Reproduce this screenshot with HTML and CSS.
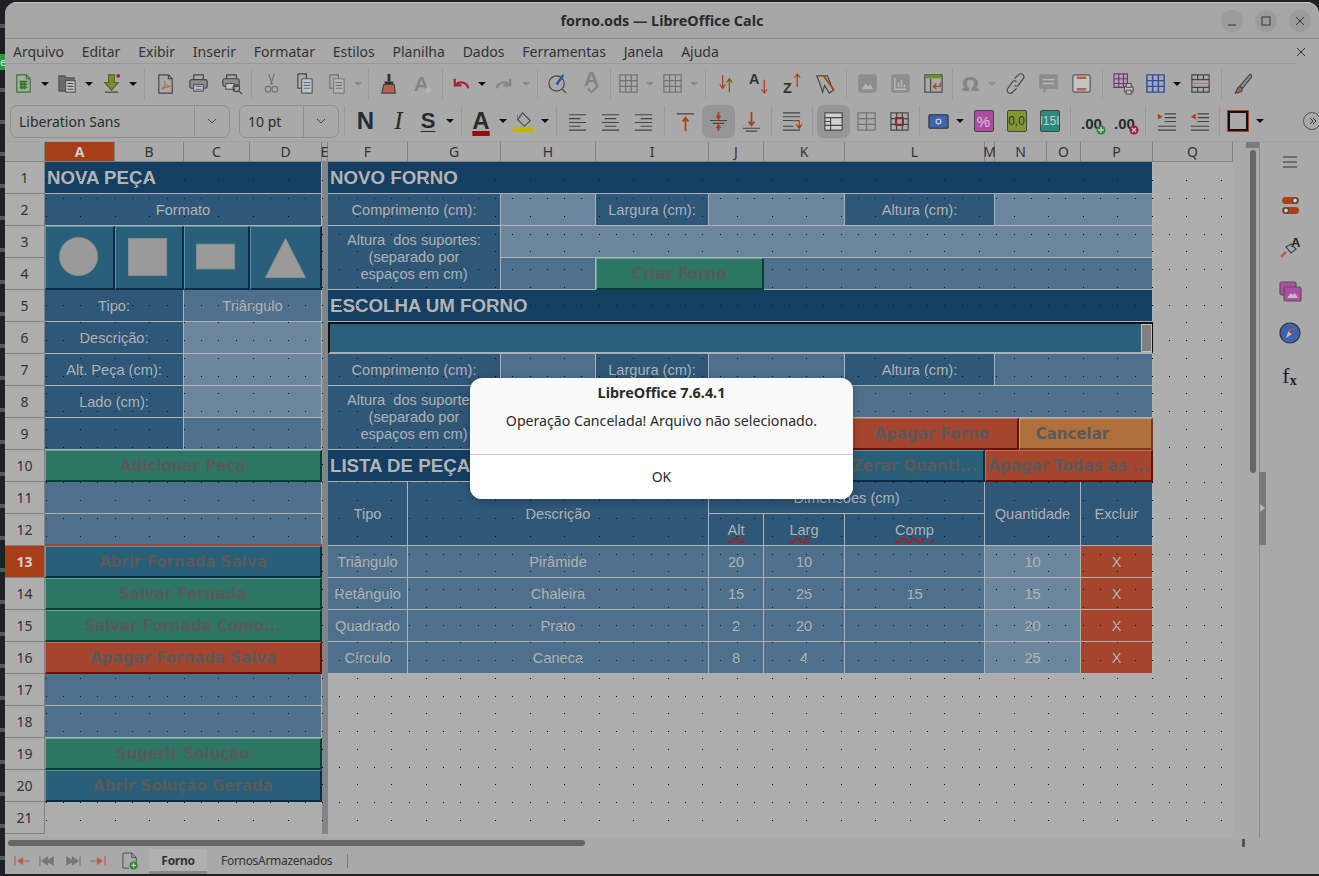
FILE: index.html
```html
<!DOCTYPE html>
<html lang="pt-BR">
  <head>
    <meta charset="UTF-8">
    <title>forno.ods — LibreOffice Calc</title>
    <link rel="stylesheet" href="styles.css">
  </head>
  <body>
    <div class="desk"><span class="desk-app">e</span></div>
    <div class="window">
      <!-- Title bar -->
      <div class="titlebar">
        <span class="title">forno.ods — LibreOffice Calc</span>
        <div class="win-btns">
          <span class="win-btn"><svg viewBox="0 0 22 22"><path d="M7 15h8"/></svg></span>
          <span class="win-btn"><svg viewBox="0 0 22 22"><rect x="7" y="7" width="8" height="8"/></svg></span>
          <span class="win-btn"><svg viewBox="0 0 22 22"><path d="M7 7l8 8M15 7l-8 8"/></svg></span>
        </div>
      </div>

      <!-- Menu -->
      <div class="menubar">
        <span>Arquivo</span><span>Editar</span><span>Exibir</span><span>Inserir</span><span>Formatar</span><span>Estilos</span><span>Planilha</span><span>Dados</span><span>Ferramentas</span><span>Janela</span><span>Ajuda</span>
        <svg class="menu-close" viewBox="0 0 10 10"><path d="M1 1l8 8M9 1l-8 8"/></svg>
      </div>

      <!-- Standard toolbar -->
      <div class="toolbar tb1">
        <span class="ico split"><svg viewBox="0 0 24 24"><path class="grn" d="M5 3h10l4 4v14H5z"/><path class="grn" d="M15 3v4h4"/><path class="grn fat" d="M8 10h8M8 13h8M8 16h8M10 9v9M13 9v9"/></svg></span><span class="drop"></span>
        <span class="ico split"><svg viewBox="0 0 24 24"><path class="gry-fill" d="M3 7V4h6l2 2h8v14H3z"/><rect class="pale" x="10" y="9" width="10" height="12"/><path d="M12 12h6M12 15h6M12 18h6"/></svg></span><span class="drop"></span>
        <span class="ico split"><svg viewBox="0 0 24 24"><path class="olive" d="M9 3h6v8h4l-7 8-7-8h4z"/><path d="M5 21h14"/><circle class="dot-red" cx="19" cy="4" r="2"/></svg></span><span class="drop"></span>
        <span class="sep"></span>
        <span class="ico"><svg viewBox="0 0 24 24"><path d="M5 3h10l4 4v15H5z"/><path d="M15 3v4h4"/><path class="sal" d="M8 18c3-2 4-6 3-9 0 4 3 6 6 6-4 0-6 1-9 3z"/></svg></span>
        <span class="ico"><svg viewBox="0 0 24 24"><path d="M7 8V3h10v5"/><rect class="gry-soft" x="3" y="8" width="18" height="9" rx="2"/><rect class="pale" x="7" y="13" width="10" height="7"/><path class="blu" d="M9 15h6M9 18h6"/></svg></span>
        <span class="ico"><svg viewBox="0 0 24 24"><path d="M7 7V3h10v4"/><rect class="gry-soft" x="3" y="7" width="17" height="8" rx="2"/><rect class="pale" x="6" y="12" width="9" height="6"/><circle cx="17" cy="17" r="3.500"/><path d="M20 20l3 3"/></svg></span>
        <span class="sep snug"></span>
        <span class="ico off"><svg viewBox="0 0 24 24"><path d="M9 2l4 11M15 2l-4 11"/><circle cx="8.500" cy="18" r="3"/><circle cx="15.500" cy="18" r="3"/></svg></span>
        <span class="ico"><svg viewBox="0 0 24 24"><path d="M5 2h9v5"/><path d="M5 2v15h4"/><rect class="pale" x="9" y="7" width="11" height="15" rx="1"/><path class="blu" d="M11 11h7M11 14h7M11 17h7"/></svg></span>
        <span class="ico split off"><svg viewBox="0 0 24 24"><path d="M5 3h9v4M5 3v14h4"/><rect class="pale" x="9" y="7" width="11" height="15" rx="1"/><path d="M11 11h7M11 14h7M11 17h7"/></svg></span><span class="drop off"></span>
        <span class="sep snug"></span>
        <span class="ico"><svg viewBox="0 0 24 24"><path class="dark-fill" d="M11 2h3v8h-3z"/><path class="dark-fill" d="M8 10h9v3H8z"/><path class="sal-fill" d="M7 13h11l1 9H5z"/></svg></span>
        <span class="ico off"><svg viewBox="0 0 24 24"><text class="glyph-a" x="4" y="20">A</text><circle class="pale-off" cx="19" cy="19" r="3"/></svg></span>
        <span class="sep"></span>
        <span class="ico split narrow"><svg viewBox="0 0 24 24"><path class="red-line" d="M19 17c-1-6-8-8-13-4"/><path class="red-line" d="M5 7v7h7"/></svg></span><span class="drop"></span>
        <span class="ico split off"><svg viewBox="0 0 24 24"><path class="thick" d="M4 17c1-6 8-8 13-4"/><path class="thick" d="M18 7v7h-7"/></svg></span><span class="drop off"></span>
        <span class="sep wide-sep"></span>
        <span class="ico"><svg viewBox="0 0 24 24"><circle cx="10" cy="12" r="8"/><path d="M16 18l4 4"/><path class="blu-fat" d="M10 13l7-10"/></svg></span>
        <span class="ico off"><svg viewBox="0 0 24 24"><text class="glyph-a" x="4" y="15">A</text><path class="thick" d="M8 17l4 4 7-7"/></svg></span>
        <span class="sep tight"></span>
        <span class="ico split off"><svg viewBox="0 0 24 24"><rect x="3" y="3" width="18" height="18"/><path d="M3 9h18M3 15h18M9 3v18M15 3v18"/></svg></span><span class="drop off"></span>
        <span class="ico split off"><svg viewBox="0 0 24 24"><rect x="3" y="3" width="18" height="18"/><path d="M3 9h18M3 15h18M9 3v18M15 3v18"/></svg></span><span class="drop off"></span>
        <span class="sep"></span>
        <span class="ico"><svg viewBox="0 0 24 24"><path class="org-line" d="M8 3v14M5 13l3 4 3-4M15 21V7M12 11l3-4 3 4"/></svg></span>
        <span class="ico"><svg viewBox="0 0 24 24"><text class="glyph-sm" x="1" y="12">A</text><path class="org-line" d="M17 8v14M14 18l3 4 3-4"/></svg></span>
        <span class="ico"><svg viewBox="0 0 24 24"><text class="glyph-sm" x="2" y="22">Z</text><path class="org-line" d="M17 16V2M14 6l3-4 3 4"/></svg></span>
        <span class="ico"><svg viewBox="0 0 24 24"><path d="M3 4h11l6 15-4 3-5-8-2 7-3-9z"/><path class="org-fat" d="M10 4l11 15"/></svg></span>
        <span class="sep"></span>
        <span class="ico off"><svg viewBox="0 0 24 24"><rect class="off-fill" x="3" y="3" width="18" height="18" rx="2"/><path class="pale-off" d="M6 18l4-6 3 3 2-2 3 5z"/></svg></span>
        <span class="ico off"><svg viewBox="0 0 24 24"><rect class="off-fill" x="3" y="3" width="18" height="18" rx="2"/><path class="pale-line" d="M6 6v12h12M10 16v-5M13 16V8M16 16v-3"/></svg></span>
        <span class="ico"><svg viewBox="0 0 24 24"><rect x="3" y="3" width="18" height="18"/><path class="olive-fat" d="M4 5h16"/><path d="M9 7v13"/><path class="org-line" d="M19 11v4h-7M15 12l-3 3 3 3"/></svg></span>
        <span class="sep tight"></span>
        <span class="ico split off"><svg viewBox="0 0 24 24"><text class="glyph-om" x="3" y="20">Ω</text></svg></span><span class="drop off"></span>
        <span class="ico"><svg viewBox="0 0 24 24"><path d="M11 7l4-4a3 3 0 0 1 5 4l-5 7a3 3 0 0 1-4 0"/><path d="M13 17l-4 4a3 3 0 0 1-5-4l5-7a3 3 0 0 1 4 0"/></svg></span>
        <span class="ico off"><svg viewBox="0 0 24 24"><path class="off-fill" d="M3 3h18v14h-11l-3 4v-4H3z"/><path class="pale-line" d="M6 8h12M6 12h12"/></svg></span>
        <span class="ico"><svg viewBox="0 0 24 24"><rect class="pale" x="3" y="3" width="18" height="18" rx="2"/><path class="sal-fat" d="M7 6h10M7 18h10"/></svg></span>
        <span class="sep"></span>
        <span class="ico"><svg viewBox="0 0 24 24"><path class="pur" d="M2 2h14v14H2zM2 7h14M2 12h14M7 2v14M12 2v14"/><rect class="pale" x="13" y="15" width="9" height="6" rx="1"/><rect class="pale" x="15" y="12" width="5" height="4"/><rect class="pale" x="15" y="19" width="5" height="4"/></svg></span>
        <span class="ico split"><svg viewBox="0 0 24 24"><path class="blu-dark" d="M3 3h18v18H3zM3 9h18M3 15h18M9 3v18M15 3v18"/></svg></span><span class="drop"></span>
        <span class="ico"><svg viewBox="0 0 24 24"><path d="M3 3h18v18H3zM3 8h18M3 16h18M9 3v5M15 3v5M9 16v5M15 16v5"/><path class="sal" d="M2 12h20" stroke-dasharray="2 1"/></svg></span>
        <span class="sep"></span>
        <span class="ico"><svg viewBox="0 0 24 24"><path class="gry-soft" d="M20 2c2 1 2 3 1 4l-9 11-3-2z"/><path class="sal-fill" d="M9 15l3 2c0 3-3 5-8 5 2-1 2-6 5-7z"/></svg></span>
      </div>

      <!-- Formatting toolbar -->
      <div class="toolbar tb2">
        <div class="combo font-combo"><span class="combo-text">Liberation Sans</span><span class="combo-btn"><svg viewBox="0 0 10 6"><path d="M1 1l4 4 4-4"/></svg></span></div>
        <div class="combo size-combo"><span class="combo-text">10 pt</span><span class="combo-btn"><svg viewBox="0 0 10 6"><path d="M1 1l4 4 4-4"/></svg></span></div>
        <span class="sep"></span>
        <span class="ico txt bold">N</span>
        <span class="ico txt ital">I</span>
        <span class="ico txt under split pull">S</span><span class="drop"></span>
        <span class="sep"></span>
        <span class="ico txt color split">A</span><span class="drop"></span>
        <span class="ico split pull"><svg viewBox="0 0 24 24"><path d="M11 3l8 8-6 6-7-7z"/><path class="blu" d="M6 9V5"/><rect class="ylw" x="1" y="18" width="22" height="5"/></svg></span><span class="drop"></span>
        <span class="sep"></span>
        <span class="ico"><svg viewBox="0 0 24 24"><path d="M3 5h18M3 9h12M3 13h18M3 17h12M3 21h18"/></svg></span>
        <span class="ico"><svg viewBox="0 0 24 24"><path d="M3 5h18M6 9h12M3 13h18M6 17h12M3 21h18"/></svg></span>
        <span class="ico"><svg viewBox="0 0 24 24"><path d="M3 5h18M9 9h12M3 13h18M9 17h12M3 21h18"/></svg></span>
        <span class="sep"></span>
        <span class="ico"><svg viewBox="0 0 24 24"><path d="M3 4h18"/><path class="org-fat" d="M12 22V8M9 12l3-4 3 4"/></svg></span>
        <span class="ico active"><svg viewBox="0 0 24 24"><path d="M3 11h18M6 14h12"/><path class="org-fat" d="M12 2v6M10 6l2 3 2-3M12 22v-5M10 19l2-3 2 3"/></svg></span>
        <span class="ico"><svg viewBox="0 0 24 24"><path d="M3 19h18M6 22h12"/><path class="org-fat" d="M12 2v13M9 12l3 4 3-4"/></svg></span>
        <span class="sep snug"></span>
        <span class="ico"><svg viewBox="0 0 24 24"><path d="M3 3h18M3 7h18M3 11h11M3 21h18M3 17h11"/><path class="org-line" d="M14 11h6v7M17 15l3 4 3-4"/></svg></span>
        <span class="sep"></span>
        <span class="ico active"><svg viewBox="0 0 24 24"><rect class="light" x="3" y="3" width="18" height="18"/><path d="M3 8h18M3 16h18M9 8v13"/><path d="M9 12H3"/></svg></span>
        <span class="ico off"><svg viewBox="0 0 24 24"><rect x="3" y="3" width="18" height="18"/><path d="M3 9h18M3 15h18M12 3v18"/></svg></span>
        <span class="ico"><svg viewBox="0 0 24 24"><rect x="3" y="3" width="18" height="18"/><path d="M3 9h18M3 15h18M9 3v18M15 3v18"/><rect class="red-line thin" x="8" y="8" width="8" height="8"/></svg></span>
        <span class="sep snug"></span>
        <span class="ico split"><svg viewBox="0 0 24 24"><rect class="blu-fill" x="2" y="5" width="20" height="14" rx="1"/><circle class="pale-line" cx="12" cy="12" r="2.500"/></svg></span><span class="drop"></span>
        <span class="ico"><span class="chip chip-pur">%</span></span>
        <span class="ico"><span class="chip chip-olv">0,0</span></span>
        <span class="ico"><span class="chip chip-teal">I15I</span></span>
        <span class="sep"></span>
        <span class="ico txt dec">.00<svg class="badge" viewBox="0 0 10 10"><circle class="bg-grn" cx="5" cy="5" r="4.500"/><path class="pale-line" d="M5 2v6M2 5h6"/></svg></span>
        <span class="ico txt dec">.00<svg class="badge" viewBox="0 0 10 10"><circle class="bg-red" cx="5" cy="5" r="4.500"/><path class="pale-line" d="M3 3l4 4M7 3l-4 4"/></svg></span>
        <span class="sep"></span>
        <span class="ico"><svg viewBox="0 0 24 24"><path d="M10 4h12M10 8h12M10 12h12M3 17h19M3 21h19"/><path class="org-solid" d="M3 4l5 3-5 3z"/></svg></span>
        <span class="ico"><svg viewBox="0 0 24 24"><path d="M10 4h12M10 8h12M10 12h12M3 17h19M3 21h19"/><path class="org-solid" d="M8 4l-5 3 5 3z"/></svg></span>
        <span class="sep snug"></span>
        <span class="ico split"><span class="border-ico"></span></span><span class="drop"></span>
        <span class="more"><svg viewBox="0 0 16 16"><path d="M6 5l3 3-3 3M9 5l3 3-3 3"/></svg></span>
      </div>

      <!-- Sheet -->
      <div class="main">
        <div class="sheet">
          <div class="col-hd"></div><div class="col-hd on">A</div><div class="col-hd">B</div><div class="col-hd">C</div><div class="col-hd">D</div><div class="col-hd">E</div><div class="col-hd">F</div><div class="col-hd">G</div><div class="col-hd">H</div><div class="col-hd">I</div><div class="col-hd">J</div><div class="col-hd">K</div><div class="col-hd">L</div><div class="col-hd">M</div><div class="col-hd">N</div><div class="col-hd">O</div><div class="col-hd">P</div><div class="col-hd">Q</div>

          <div class="row-hd r-1">1</div><div class="row-hd r-2">2</div><div class="row-hd r-3">3</div><div class="row-hd r-4">4</div><div class="row-hd r-5">5</div><div class="row-hd r-6">6</div><div class="row-hd r-7">7</div><div class="row-hd r-8">8</div><div class="row-hd r-9">9</div><div class="row-hd r-10">10</div><div class="row-hd r-11">11</div><div class="row-hd r-12">12</div><div class="row-hd r-13 on">13</div><div class="row-hd r-14">14</div><div class="row-hd r-15">15</div><div class="row-hd r-16">16</div><div class="row-hd r-17">17</div><div class="row-hd r-18">18</div><div class="row-hd r-19">19</div><div class="row-hd r-20">20</div><div class="row-hd r-21">21</div>

          <div class="col-e"></div>

          <!-- Left block -->
          <div class="cell dk head r-1 c-ad">NOVA PEÇA</div>
          <div class="cell md r-2 c-ad">Formato</div>
          <div class="btn teal shape r-3 h2 c-a"><svg viewBox="0 0 70 64"><circle cx="34" cy="31" r="20"/></svg></div>
          <div class="btn teal shape r-3 h2 c-b"><svg viewBox="0 0 69 64"><rect x="13" y="12" width="40" height="39"/></svg></div>
          <div class="btn teal shape r-3 h2 c-c"><svg viewBox="0 0 66 64"><rect x="12" y="18" width="40" height="26"/></svg></div>
          <div class="btn teal shape r-3 h2 c-d"><svg viewBox="0 0 72 64"><path d="M36 12l21 41H15z"/></svg></div>
          <div class="cell md r-5 c-ab">Tipo:</div><div class="cell lt r-5 c-cd">Triângulo</div>
          <div class="cell md r-6 c-ab">Descrição:</div><div class="cell in r-6 c-cd"></div>
          <div class="cell md r-7 c-ab">Alt. Peça (cm):</div><div class="cell in r-7 c-cd"></div>
          <div class="cell md r-8 c-ab">Lado (cm):</div><div class="cell in r-8 c-cd"></div>
          <div class="cell md r-9 c-ab"></div><div class="cell lt r-9 c-cd"></div>
          <div class="btn green r-10 c-ad">Adicionar Peça</div>
          <div class="cell lt r-11 c-ad"></div>
          <div class="cell lt r-12 c-ad"></div>
          <div class="btn teal current r-13 c-ad">Abrir Fornada Salva</div>
          <div class="btn green r-14 c-ad">Salvar Fornada</div>
          <div class="btn green r-15 c-ad">Salvar Fornada Como...</div>
          <div class="btn red r-16 c-ad">Apagar Fornada Salva</div>
          <div class="cell lt r-17 c-ad"></div>
          <div class="cell lt r-18 c-ad"></div>
          <div class="btn green r-19 c-ad">Sugerir Solução</div>
          <div class="btn teal r-20 c-ad">Abrir Solução Gerada</div>

          <!-- Novo forno -->
          <div class="cell dk head r-1 c-fp">NOVO FORNO</div>
          <div class="cell md r-2 c-fg">Comprimento (cm):</div><div class="cell in r-2 c-h"></div>
          <div class="cell md r-2 c-i">Largura (cm):</div><div class="cell in r-2 c-jk"></div>
          <div class="cell md r-2 c-lm">Altura (cm):</div><div class="cell in r-2 c-np"></div>
          <div class="cell md multi r-3 h2 c-fg">Altura&nbsp; dos suportes:<br>(separado por<br>espaços em cm)</div>
          <div class="cell in r-3 c-hp"></div>
          <div class="cell lt r-4 c-h"></div>
          <div class="btn green r-4 c-ij">Criar Forno</div>
          <div class="cell lt r-4 c-kp"></div>

          <!-- Escolha um forno -->
          <div class="cell dk head r-5 c-fp">ESCOLHA UM FORNO</div>
          <div class="select r-6 c-fp"><span class="select-btn"></span></div>
          <div class="cell md r-7 c-fg">Comprimento (cm):</div><div class="cell lt r-7 c-h"></div>
          <div class="cell md r-7 c-i">Largura (cm):</div><div class="cell lt r-7 c-jk"></div>
          <div class="cell md r-7 c-lm">Altura (cm):</div><div class="cell lt r-7 c-np"></div>
          <div class="cell md multi r-8 h2 c-fg">Altura&nbsp; dos suportes:<br>(separado por<br>espaços em cm)</div>
          <div class="cell lt r-8 c-hp"></div>
          <div class="cell lt r-9 c-hk"></div>
          <div class="pair r-9 c-lp">
            <div class="btn red wide">Apagar Forno</div>
            <div class="btn orange fill">Cancelar</div>
          </div>

          <!-- Lista de pecas -->
          <div class="cell dk head r-10 c-fk">LISTA DE PEÇAS</div>
          <div class="btn teal small r-10 c-l">Zerar Quanti...</div>
          <div class="btn red small r-10 c-mp">Apagar Todas as ...</div>
          <div class="cell md r-11 h2 c-f">Tipo</div>
          <div class="cell md r-11 h2 c-gi">Descrição</div>
          <div class="cell md r-11 c-jl">Dimensões (cm)</div>
          <div class="cell md r-11 h2 c-mo">Quantidade</div>
          <div class="cell md r-11 h2 c-p">Excluir</div>
          <div class="cell md r-12 c-j"><span class="typo">Alt</span></div>
          <div class="cell md r-12 c-k"><span class="typo">Larg</span></div>
          <div class="cell md r-12 c-l"><span class="typo">Comp</span></div>

          <div class="cell lt r-13 c-f">Triângulo</div><div class="cell lt r-13 c-gi">Pirâmide</div><div class="cell lt r-13 c-j">20</div><div class="cell lt r-13 c-k">10</div><div class="cell lt r-13 c-l"></div><div class="cell in r-13 c-mo">10</div><div class="cell del r-13 c-p">X</div>
          <div class="cell lt r-14 c-f">Retângulo</div><div class="cell lt r-14 c-gi">Chaleira</div><div class="cell lt r-14 c-j">15</div><div class="cell lt r-14 c-k">25</div><div class="cell lt r-14 c-l">15</div><div class="cell in r-14 c-mo">15</div><div class="cell del r-14 c-p">X</div>
          <div class="cell lt r-15 c-f">Quadrado</div><div class="cell lt r-15 c-gi">Prato</div><div class="cell lt r-15 c-j">2</div><div class="cell lt r-15 c-k">20</div><div class="cell lt r-15 c-l"></div><div class="cell in r-15 c-mo">20</div><div class="cell del r-15 c-p">X</div>
          <div class="cell lt r-16 c-f">Círculo</div><div class="cell lt r-16 c-gi">Caneca</div><div class="cell lt r-16 c-j">8</div><div class="cell lt r-16 c-k">4</div><div class="cell lt r-16 c-l"></div><div class="cell in r-16 c-mo">25</div><div class="cell del r-16 c-p">X</div>

          <!-- Grid dots drawn by Calc over the cells, filled in by dots.js -->
          <svg class="dots"><path id="grid-dots"/></svg>
        </div>

        <div class="vscroll">
          <span class="vscroll-top"></span>
          <span class="vscroll-thumb"></span>
        </div>

        <!-- Sidebar -->
        <div class="sidebar">
          <span class="side-handle"></span>
          <svg class="side-ico" viewBox="0 0 24 24"><path d="M5 7h14M5 12h14M5 17h14"/></svg>
          <svg class="side-ico" viewBox="0 0 24 24"><rect class="org-solid" x="4" y="3" width="17" height="7" rx="3.500"/><circle class="light" cx="17" cy="6.500" r="2.500"/><rect class="org-solid" x="4" y="13" width="17" height="7" rx="3.500"/><circle class="light" cx="8" cy="16.500" r="2.500"/></svg>
          <svg class="side-ico" viewBox="0 0 24 24"><text class="glyph-side" x="13" y="11">A</text><path d="M8 11l5-3 5 5-5 4z"/><path class="sal-fat" d="M3 21l5-5"/></svg>
          <svg class="side-ico" viewBox="0 0 24 24"><rect class="pink" x="2" y="3" width="16" height="13" rx="2"/><rect class="pink" x="6" y="8" width="17" height="14" rx="2"/><path class="pale-off" d="M9 19l4-5 2 2 2-2 3 5z"/></svg>
          <svg class="side-ico" viewBox="0 0 24 24"><circle class="blu-fill" cx="12" cy="12" r="10"/><path class="pale-off" d="M16 7l-6 4-2 6 6-4z"/><path class="red-solid" d="M16 7l-5 4 3 2z"/></svg>
          <div class="side-fx">f<sub>x</sub></div>
        </div>
      </div>

      <!-- Scroll + sheet tabs -->
      <div class="hscroll"><span class="hscroll-thumb"></span><span class="hscroll-mark"></span></div>
      <div class="tabbar">
        <div class="tab-nav">
          <svg viewBox="0 0 18 12" class="sal-nav"><path d="M1 1v10M4 6h13M4 6l5-3v6z"/></svg>
          <svg viewBox="0 0 18 12" class="gry-nav"><path d="M1 1v10M9 6l6-4v8zM3 6l6-4v8z"/></svg>
          <svg viewBox="0 0 18 12" class="gry-nav"><path d="M17 1v10M9 6L3 2v8zM15 6L9 2v8z"/></svg>
          <svg viewBox="0 0 18 12" class="sal-nav"><path d="M17 1v10M14 6H1M14 6L9 3v6z"/></svg>
        </div>
        <svg class="tab-add" viewBox="0 0 18 20"><path d="M1 2q0-1 1-1h9l5 5v6M1 2v15q0 1 1 1h6"/><path d="M11 1v5h5"/><circle class="bg-grn" cx="13" cy="15" r="4.500"/><path class="pale-line" d="M13 12.500v5M10.500 15h5"/></svg>
        <span class="tab on">Forno</span>
        <span class="tab">FornosArmazenados</span>
        <span class="tab-sep"></span>
      </div>

      <!-- Message box -->
      <div class="dialog">
        <div class="dialog-body">
          <div class="dialog-title">LibreOffice 7.6.4.1</div>
          <div class="dialog-msg">Operação Cancelada! Arquivo não selecionado.</div>
        </div>
        <div class="dialog-btn">OK</div>
      </div>
    </div>
    <script src="dots.js"></script>
  </body>
</html>
```

FILE: styles.css
```css
/* Reset */
* {
  margin: 0;
  padding: 0;
  box-sizing: border-box;
}

html,
body {
  height: 876px;
  overflow: hidden;
}

body {
  display: flex;
  background-color: #1e2025;
  font-family: "Noto Sans", sans-serif;
  color: #333;
}

/* Desktop behind the window */
.desk {
  width: 5px;
  padding-top: 54px;
  background: repeating-linear-gradient(to bottom, #1e2025 0, #1e2025 24px, #54575b 24px, #54575b 28px, #1e2025 28px, #1e2025 32px);
  overflow: hidden;
}

.desk-app {
  display: block;
  height: 16px;
  background-color: #2e9a3e;
  color: #ddd;
  font-size: 11px;
  line-height: 16px;
}

.window {
  position: relative;
  display: flex;
  flex-direction: column;
  flex: 1;
  height: 872px;
  margin-top: 2px;
  background-color: #a9a9a9;
  border-radius: 12px 12px 0 0;
  overflow: hidden;
}

/* Title bar */
.titlebar {
  display: flex;
  justify-content: center;
  align-items: center;
  position: relative;
  flex: none;
  height: 37px;
  padding-bottom: 1px;
  background-color: #a6a6a6;
  border-top: 1px solid #c4c4c4;
  border-bottom: 1px solid #8c8c8c;
}

.title {
  font-size: 14.400px;
  font-weight: 700;
  color: #2b2b2b;
}

.win-btns {
  position: absolute;
  right: 8px;
  top: 7px;
  display: flex;
  gap: 12px;
}

.win-btn {
  width: 22px;
  height: 22px;
  border-radius: 50%;
  background-color: #9b9b9b;
}

.win-btn svg {
  display: block;
  fill: none;
  stroke: #333;
}

/* Menu */
.menubar {
  display: flex;
  align-items: center;
  gap: 17.800px;
  position: relative;
  flex: none;
  height: 25px;
  padding-left: 8px;
  font-size: 14px;
  color: #333;
}

.menubar::after {
  content: "";
  position: absolute;
  left: 0;
  right: 24px;
  bottom: 0;
  height: 1px;
  background-color: #989898;
}

.menu-close {
  position: absolute;
  right: 13px;
  top: 8px;
  width: 10px;
  height: 10px;
  fill: none;
  stroke: #333;
}

/* Toolbars */
.toolbar {
  display: flex;
  align-items: center;
  flex: none;
}

.tb1 {
  height: 39px;
  padding-left: 3px;
}

.tb2 {
  height: 38px;
  padding-left: 5px;
  padding-bottom: 2px;
}

.ico {
  display: flex;
  justify-content: center;
  align-items: center;
  position: relative;
  flex: none;
  width: 33px;
  height: 33px;
  font-family: "Liberation Sans", sans-serif;
}

.ico.split {
  width: 30px;
}

.ico.pull {
  margin-left: -2px;
}

.ico.narrow {
  width: 28px;
}

.ico svg {
  width: 23px;
  height: 23px;
  fill: none;
  stroke: #444;
  stroke-width: 1.200;
  overflow: visible;
}

.side-ico {
  width: 24px;
  height: 24px;
  fill: none;
  stroke: #444;
  stroke-width: 1.200;
  overflow: visible;
}

.ico.off {
  opacity: 0.55;
}

.ico.active {
  background-color: #969696;
  border-radius: 7px;
}

.drop {
  flex: none;
  width: 14px;
  height: 4px;
  position: relative;
}

.drop::after {
  content: "";
  position: absolute;
  left: 3px;
  top: 0;
  border-left: 4px solid transparent;
  border-right: 4px solid transparent;
  border-top: 4px solid #111;
}

.drop.off::after {
  border-top-color: #8a8a8a;
}

.sep {
  flex: none;
  width: 1px;
  height: 30px;
  margin: 0 4px;
  background-color: #999;
}

.sep.snug {
  margin: 0 3px;
}

.sep.tight {
  margin: 0 2px;
}

.sep.wide-sep {
  margin: 0 4px;
}

/* Icon colour helpers */
.grn { stroke: #2f7a2a; }
.grn.fat { stroke-width: 1.800; }
.gry-fill { fill: #6b6b6b; stroke: #555; }
.gry-soft { fill: #8e8e8e; stroke: #444; }
.pale { fill: #c4c4c4; stroke: #555; }
.pale-off { fill: #c0c0c0; stroke: none; }
.pale-line { stroke: #c8c8c8; fill: none; stroke-width: 1.400; }
.olive { fill: #75902e; stroke: #4d6320; }
.dot-red { fill: #a61b2e; stroke: none; }
.sal { stroke: #b8654f; }
.sal-fill { fill: #b5604e; stroke: #444; }
.sal-fat { stroke: #b9604d; stroke-width: 2.500; }
.dark-fill { fill: #333; stroke: none; }
.blu { stroke: #5a6aa0; }
.blu-fat { stroke: #2c55a8; stroke-width: 2.500; }
.blu-dark { stroke: #2b50a5; stroke-width: 1.500; }
.blu-fill { fill: #3f63ad; stroke: #333; }
.red-line { stroke: #b01a30; stroke-width: 2.200; }
.red-line.thin { stroke-width: 1.300; }
.red-solid { fill: #a8233a; stroke: none; }
.thick { stroke: #666; stroke-width: 2.200; }
.org-line { stroke: #ae3f12; stroke-width: 1.300; }
.org-fat { stroke: #ae3f12; stroke-width: 1.800; }
.org-solid { fill: #ae3f12; stroke: none; }
.olive-fat { stroke: #6f8f1f; stroke-width: 3; }
.off-fill { fill: #777; stroke: #777; }
.pur { stroke: #7b2a80; }
.ylw { fill: #c2b400; stroke: none; }
.light { fill: #d0d0d0; stroke: #444; }
.pink { fill: #b04ea6; stroke: #555; }
.bg-grn { fill: #2d8a33; stroke: none; }
.bg-red { fill: #a61b3a; stroke: none; }

.glyph-a {
  font: 700 22px "Liberation Sans", sans-serif;
  fill: #666;
  stroke: none;
}

.glyph-sm {
  font: 700 15px "Liberation Sans", sans-serif;
  fill: #333;
  stroke: none;
}

.glyph-om {
  font: 700 21px "DejaVu Sans", sans-serif;
  fill: #666;
  stroke: none;
}

.glyph-side {
  font: 700 13px "Liberation Sans", sans-serif;
  fill: #222;
  stroke: none;
}

/* Combo boxes */
.combo {
  display: flex;
  flex: none;
  height: 33px;
  border: 1px solid #8f8f8f;
  border-radius: 7px;
  font-size: 14px;
}

.font-combo {
  width: 220px;
  margin-right: 9px;
}

.size-combo {
  width: 100px;
  margin-right: 1px;
}

.combo-text {
  display: flex;
  align-items: center;
  flex: 1;
  padding-left: 8px;
  color: #2b2b2b;
}

.combo-btn {
  display: flex;
  justify-content: center;
  align-items: center;
  width: 35px;
  border-left: 1px solid #8f8f8f;
}

.combo-btn svg {
  width: 10px;
  height: 6px;
  fill: none;
  stroke: #444;
}

.txt {
  color: #2b2b2b;
  font-size: 22px;
}

.bold {
  font-weight: 700;
  font-size: 24px;
}

.ital {
  font-family: "Liberation Serif", serif;
  font-style: italic;
  font-size: 25px;
}

.under {
  font-weight: 700;
  text-decoration: underline;
  text-decoration-thickness: 1px;
  text-underline-offset: 3px;
}

.color {
  font-weight: 700;
  font-size: 24px;
  text-decoration: underline 5px #8f1010;
  text-underline-offset: 2px;
}

.chip {
  display: flex;
  justify-content: center;
  align-items: center;
  width: 20px;
  height: 22px;
  border: 1px solid #444;
  border-radius: 2px;
  font-size: 12px;
  color: #ccc;
  overflow: hidden;
}

.chip-pur { background-color: #ad4ba4; font-size: 15px; }
.chip-olv { background-color: #7f9a2c; color: #333; }
.chip-teal { background-color: #2b8a80; }

.dec {
  align-items: flex-end;
  font-size: 15px;
  font-weight: 700;
  padding-bottom: 6px;
}

.ico svg.badge {
  position: absolute;
  right: 2px;
  bottom: 3px;
  width: 10px;
  height: 10px;
}

.border-ico {
  width: 20px;
  height: 20px;
  border: 2px solid #111;
  outline: 1px solid #ae3f12;
}

.more {
  flex: none;
  width: 18px;
  height: 18px;
  margin-left: 36px;
  border: 1px solid #555;
  border-radius: 50%;
}

.more svg {
  display: block;
  fill: none;
  stroke: #333;
}

/* Sheet */
.main {
  display: flex;
  flex: none;
  height: 696px;
  border-top: 1px solid #a0a0a0;
}

.sheet {
  display: grid;
  flex: none;
  grid-template-columns: [hd] 40px [a] 70px [b] 69px [c] 66px [d] 72px [e] 6px [f] 80px [g] 93px [h] 95px [i] 113px [j] 55px [k] 81px [l] 140px [m] 10px [n] 52px [o] 34px [p] 72px [q] 80px [end];
  grid-template-rows: 20px repeat(21, 32px);
  width: 1228px;
  background-color: #adadad;
  font: 14.600px "Liberation Sans", sans-serif;
  color: #b2b2b2;
  overflow: hidden;
}

.col-hd {
  display: flex;
  justify-content: center;
  align-items: center;
  grid-row: 1;
  background-color: #a9a9a9;
  border-right: 1px solid #828282;
  border-bottom: 1px solid #828282;
  font: 14px "Noto Sans", sans-serif;
  color: #333;
}

.col-hd.on {
  background-color: #a83e18;
  color: #d0d0d0;
  font-weight: 700;
}

.row-hd {
  display: flex;
  justify-content: center;
  align-items: center;
  grid-column: hd;
  background-color: #adadad;
  border-right: 1px solid #828282;
  border-bottom: 1px solid #828282;
  font: 14px "Noto Sans", sans-serif;
  color: #333;
}

.row-hd.on {
  background-color: #a83e18;
  color: #d0d0d0;
  font-weight: 700;
}

.col-e {
  grid-column: e;
  grid-row: 2 / span 21;
  background-color: #7f8589;
}

.cell {
  display: flex;
  justify-content: center;
  align-items: center;
  text-align: center;
  border-right: 1px solid #aeb2b6;
  border-bottom: 1px solid #aeb2b6;
}

.dk { background-color: #143e62; }
.md { background-color: #2f5778; }
.lt { background-color: #4f708c; }
.in { background-color: #6c869d; }
.del { background-color: #a5452e; }

.head {
  justify-content: flex-start;
  padding-left: 2px;
  font-size: 18.700px;
  font-weight: 700;
  color: #b4b4b4;
}

.multi {
  line-height: 17px;
}

.typo {
  text-decoration: underline wavy #a81c1c 1.500px;
  text-underline-offset: 2px;
}

.btn {
  display: flex;
  justify-content: center;
  align-items: center;
  position: relative;
  z-index: 2;
  border-style: solid;
  border-width: 1px 2px 2px 1px;
  font: 700 15px "DejaVu Sans", sans-serif;
  color: #5a5a5a;
  white-space: nowrap;
  overflow: hidden;
}

.btn.teal { background-color: #286079; border-color: #5b90a6 #0b2c44 #0b2c44 #5b90a6; }
.btn.green { background-color: #2d7565; border-color: #64a897 #0c3d33 #0c3d33 #64a897; }
.btn.red { background-color: #a5452e; border-color: #c0715f #6a0f06 #6a0f06 #c0715f; }
.btn.orange { background-color: #b0703e; border-color: #c89a70 #7a3a10 #7a3a10 #c89a70; }

.btn.small {
  font-size: 15px;
  padding: 0 2px;
}

.current {
  box-shadow: 0 -2px 0 #a5452e;
}

.shape svg {
  width: 100%;
  height: 100%;
  fill: #9a9a9a;
  stroke: #8a8a8a;
}

.pair {
  display: flex;
  position: relative;
  z-index: 2;
}

.wide {
  width: 174px;
}

.fill {
  flex: 1;
  padding-right: 26px;
}

.select {
  position: relative;
  z-index: 2;
  background-color: #2a607c;
  border: 2px solid #111;
  border-right-width: 1px;
  border-bottom-color: #adb0b3;
}

.select-btn {
  position: absolute;
  right: 0;
  top: 0;
  width: 11px;
  height: 100%;
  background-color: #808080;
  border: 1px solid #c0c0c0;
}

.dots {
  position: relative;
  z-index: 1;
  grid-column: a / end;
  grid-row: 2 / span 21;
  width: 100%;
  height: 100%;
  fill: none;
  stroke: #111;
  shape-rendering: crispEdges;
  pointer-events: none;
}

/* Grid placement */
.r-1 { grid-row-start: 2; }
.r-2 { grid-row-start: 3; }
.r-3 { grid-row-start: 4; }
.r-4 { grid-row-start: 5; }
.r-5 { grid-row-start: 6; }
.r-6 { grid-row-start: 7; }
.r-7 { grid-row-start: 8; }
.r-8 { grid-row-start: 9; }
.r-9 { grid-row-start: 10; }
.r-10 { grid-row-start: 11; }
.r-11 { grid-row-start: 12; }
.r-12 { grid-row-start: 13; }
.r-13 { grid-row-start: 14; }
.r-14 { grid-row-start: 15; }
.r-15 { grid-row-start: 16; }
.r-16 { grid-row-start: 17; }
.r-17 { grid-row-start: 18; }
.r-18 { grid-row-start: 19; }
.r-19 { grid-row-start: 20; }
.r-20 { grid-row-start: 21; }
.r-21 { grid-row-start: 22; }
.h2 { grid-row-end: span 2; }

.c-a { grid-column: a; }
.c-b { grid-column: b; }
.c-c { grid-column: c; }
.c-d { grid-column: d; }
.c-f { grid-column: f; }
.c-h { grid-column: h; }
.c-i { grid-column: i; }
.c-j { grid-column: j; }
.c-k { grid-column: k; }
.c-l { grid-column: l; }
.c-p { grid-column: p; }
.c-ab { grid-column: a / c; }
.c-cd { grid-column: c / e; }
.c-ad { grid-column: a / e; }
.c-fg { grid-column: f / h; }
.c-fk { grid-column: f / l; }
.c-fp { grid-column: f / q; }
.c-gi { grid-column: g / j; }
.c-hk { grid-column: h / l; }
.c-hp { grid-column: h / q; }
.c-ij { grid-column: i / k; }
.c-jk { grid-column: j / l; }
.c-jl { grid-column: j / m; }
.c-kp { grid-column: k / q; }
.c-lm { grid-column: l / n; }
.c-lp { grid-column: l / q; }
.c-mo { grid-column: m / p; }
.c-mp { grid-column: m / q; }
.c-np { grid-column: n / q; }

/* Vertical scrollbar */
.vscroll {
  display: flex;
  flex-direction: column;
  align-items: center;
  flex: none;
  width: 27px;
  padding-left: 13px;
  border-right: 1px solid #8a8a8a;
}

.vscroll-top {
  width: 13px;
  height: 6px;
  background-color: #7a7a7a;
}

.vscroll-thumb {
  width: 6px;
  height: 323px;
  margin-top: 2px;
  border-radius: 3px;
  background-color: #666;
}

/* Sidebar */
.sidebar {
  display: flex;
  flex-direction: column;
  align-items: center;
  gap: 18.500px;
  position: relative;
  flex: 1;
  padding-top: 8px;
}

.sidebar .side-ico:first-of-type {
  margin-bottom: 1px;
  stroke: #333;
}

.side-handle {
  position: absolute;
  left: -1px;
  top: 330px;
  width: 7px;
  height: 73px;
  background-color: #777;
}

.side-handle::after {
  content: "";
  position: absolute;
  left: 1px;
  top: 32px;
  border-left: 5px solid #b4b4b4;
  border-top: 4px solid transparent;
  border-bottom: 4px solid transparent;
}

.side-fx {
  font: 22px "Liberation Serif", serif;
  color: #222;
  line-height: 24px;
}

.side-fx sub {
  font-size: 14px;
  font-weight: 700;
  vertical-align: -2px;
}

/* Horizontal scrollbar */
.hscroll {
  position: relative;
  flex: none;
  height: 11px;
  padding: 3px 0 0 3px;
}

.hscroll-thumb {
  display: block;
  width: 577px;
  height: 6px;
  border-radius: 3px;
  background-color: #666;
}

.hscroll-mark {
  position: absolute;
  left: 1237px;
  top: 2px;
  width: 3px;
  height: 8px;
  background-color: #555;
}

/* Sheet tabs */
.tabbar {
  display: flex;
  align-items: center;
  flex: 1;
  font-size: 12px;
  letter-spacing: -0.300px;
  color: #333;
}

.tab-nav {
  display: flex;
  gap: 8px;
  margin-left: 9px;
}

.tab-nav svg {
  width: 17px;
  height: 12px;
  stroke-width: 1.300;
  fill: none;
}

.sal-nav { stroke: #b5644f; fill: #b5644f !important; }
.gry-nav { stroke: #777; fill: #777 !important; }

.tab-add {
  width: 16px;
  height: 18px;
  margin-left: 16px;
  fill: none;
  stroke: #444;
}

.tab {
  height: 25px;
  line-height: 23px;
  padding: 0 14px;
}

.tab.on {
  width: 58px;
  margin-left: 11px;
  padding: 0;
  text-align: center;
  background-color: #b0b0b0;
  border-bottom: 3px solid #888;
  font-weight: 700;
}

.tab-sep {
  width: 1px;
  height: 14px;
  margin-left: 1px;
  background-color: #777;
}

/* Message box */
.dialog {
  position: absolute;
  left: 465px;
  top: 376px;
  z-index: 5;
  width: 383px;
  height: 121px;
  background-color: #fafafa;
  border-radius: 12px;
  overflow: hidden;
  text-align: center;
  box-shadow: 0 2px 8px rgba(0, 0, 0, 0.25);
}

.dialog-body {
  height: 77px;
  padding-top: 5px;
  border-bottom: 1px solid #cfcfcf;
}

.dialog-title {
  font-size: 14.400px;
  font-weight: 700;
  line-height: 20px;
  color: #2b2b2b;
}

.dialog-msg {
  margin-top: 8px;
  font-size: 14.150px;
  line-height: 20px;
  color: #2b2b2b;
}

.dialog-btn {
  height: 44px;
  line-height: 43px;
  font-size: 14px;
  color: #2b2b2b;
  background-color: #fff;
}
```

FILE: dots.js
```js
// Calc's grid dots: every other line of dots has half the density
var stepX = 34.57;
var stepY = 35.55;
var d = "";

function dot(x, y) {
  d += "M" + Math.round(x) + " " + (Math.round(y) + 0.5) + "h1";
}

for (var row = 0; row < 19; row++) {
  for (var col = 0; col < 35; col++) {
    dot(0.6 + col * stepX, 18 + row * stepY);
    dot(0.6 + col * stepX, 36 + row * stepY);
    dot(0.6 + (col + 0.5) * stepX, 36 + row * stepY);
  }
}

document.getElementById("grid-dots").setAttribute("d", d);
```
